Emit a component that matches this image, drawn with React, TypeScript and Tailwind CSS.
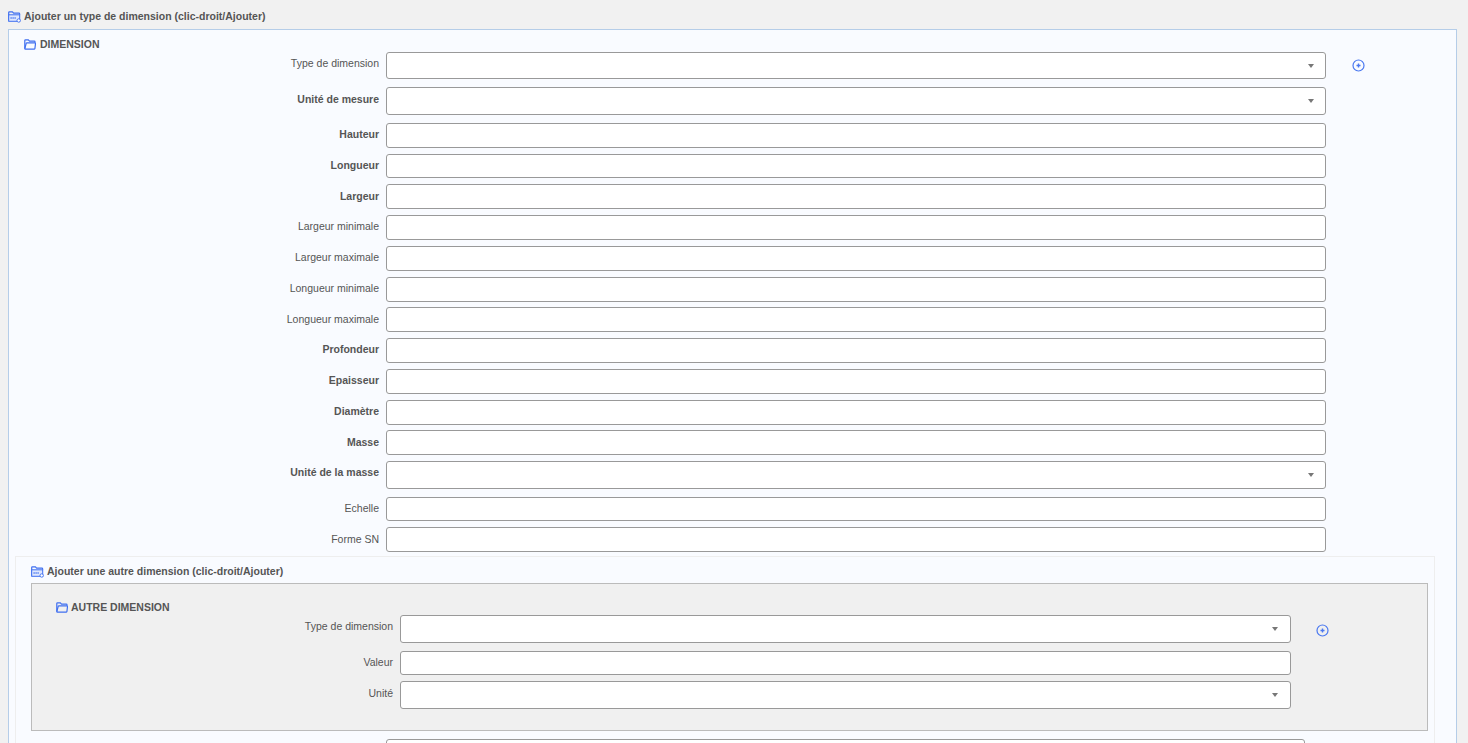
const sans = "font-['Liberation_Sans',Arial,sans-serif]";

const FolderOpen = () => (
  <svg width="12" height="11" viewBox="0 0 12 11" fill="none" stroke="#3f6ff0" strokeWidth="1.200" className="shrink-0">
    <path d="M.8 9.500V1.500c0-.4.300-.7.700-.7h2.800l1.200 1.300h4.800c.4 0 .7.300.7.700v.9" />
    <path d="M.8 9.500c0 .3.200.6.600.6h8.800c.4 0 .6-.2.700-.5L11.500 4.500c.1-.4-.1-.7-.5-.7H2.900c-.4 0-.6.200-.7.500L.8 9.500z" />
  </svg>
);

const FolderForm = () => (
  <svg width="13" height="12" viewBox="0 0 13 12" fill="none" className="shrink-0">
    <path d="M.7 9.800V1.500c0-.4.300-.7.700-.7h3l1.200 1.300h5.300c.4 0 .7.300.7.700v1" stroke="#3f6ff0" strokeWidth="1.200" />
    <rect x=".7" y="3.800" width="11" height="6.500" fill="#dfe7fd" stroke="#3f6ff0" strokeWidth="1" />
    <path d="M2.500 7h5.500" stroke="#3f6ff0" strokeWidth="1.400" strokeDasharray="1.200 .8" />
    <circle cx="10.700" cy="9.500" r="1.700" fill="#ffffff" stroke="#3f6ff0" strokeWidth=".9" />
  </svg>
);

const AddIcon = () => (
  <svg width="13" height="13" viewBox="0 0 13 13" fill="none" className="shrink-0">
    <circle cx="6.500" cy="6.500" r="5.500" stroke="#4a78f0" strokeWidth="1.200" />
    <path d="M4.500 6.500h4M6.500 4.500v4" stroke="#4a78f0" strokeWidth="1.400" />
  </svg>
);

type Field = { label: string; bold?: boolean; select?: boolean; h: number; mb: number; low?: boolean };

const dimensionFields: Field[] = [
  { label: 'Type de dimension', select: true, h: 27, mb: 8 },
  { label: 'Unité de mesure', bold: true, select: true, h: 28, mb: 8, low: true },
  { label: 'Hauteur', bold: true, h: 25, mb: 6 },
  { label: 'Longueur', bold: true, h: 24, mb: 6 },
  { label: 'Largeur', bold: true, h: 25, mb: 6, low: true },
  { label: 'Largeur minimale', h: 25, mb: 6 },
  { label: 'Largeur maximale', h: 25, mb: 6 },
  { label: 'Longueur minimale', h: 25, mb: 5 },
  { label: 'Longueur maximale', h: 25, mb: 6, low: true },
  { label: 'Profondeur', bold: true, h: 25, mb: 6 },
  { label: 'Epaisseur', bold: true, h: 25, mb: 6 },
  { label: 'Diamètre', bold: true, h: 25, mb: 5 },
  { label: 'Masse', bold: true, h: 25, mb: 6, low: true },
  { label: 'Unité de la masse', bold: true, select: true, h: 28, mb: 8 },
  { label: 'Echelle', h: 24, mb: 6 },
  { label: 'Forme SN', h: 25, mb: 0, low: true },
];

const otherFields: Field[] = [
  { label: 'Type de dimension', select: true, h: 28, mb: 8 },
  { label: 'Valeur', h: 24, mb: 6 },
  { label: 'Unité', select: true, h: 28, mb: 0, low: true },
];

const Control = ({ field, caretPad }: { field: Field; caretPad: string }) => (
  <div className={`flex h-full w-full items-center justify-end rounded-[3px] border border-[#999999] bg-white ${caretPad}`}>
    {field.select && <span className="h-0 w-0 border-x-[3.500px] border-t-[4px] border-x-transparent border-t-[#777777]" />}
  </div>
);

const Row = ({ field, labelW, inputW, caretPad, add }: { field: Field; labelW: string; inputW: string; caretPad: string; add?: string }) => (
  <div className="flex" style={{ height: field.h, marginBottom: field.mb }}>
    <label className={`${labelW} shrink-0 pr-[7px] text-right text-[10.5px] leading-[13px] text-[#555555] ${field.low ? 'pt-[6px]' : 'pt-[5px]'} ${field.bold ? 'font-bold' : ''}`}>
      {field.label}
    </label>
    <div className={`${inputW} shrink-0`}>
      <Control field={field} caretPad={caretPad} />
    </div>
    {add && <div className={add}><AddIcon /></div>}
  </div>
);

export default function App() {
  return (
    <div className={`${sans} h-[743px] w-[1468px] overflow-hidden bg-[#f1f1f1] pl-[8px]`}>
      <div className="flex h-[29px] items-center gap-[3px] pt-[5px] text-[10.5px] font-bold text-[#555555]">
        <FolderForm />
        <span>Ajouter un type de dimension (clic-droit/Ajouter)</span>
      </div>

      <div className="h-[730px] w-[1449px] border border-[#b5cde8] bg-[#f9fbff] pl-[6px]">
        <div className="flex h-[22px] items-center gap-[4px] pl-[9px] pt-[7px] text-[10.5px] font-bold text-[#555555]">
          <FolderOpen />
          <span>DIMENSION</span>
        </div>

        {dimensionFields.map((f, i) => (
          <Row
            key={f.label}
            field={f}
            labelW="w-[371px]"
            inputW="w-[940px]"
            caretPad="pr-[11px]"
            add={i === 0 ? 'pl-[26px] pt-[7px]' : undefined}
          />
        ))}

        <div className="mt-[4px] h-[200px] w-[1420px] border border-[#eeeeee] px-[15px]">
          <div className="flex h-[26px] items-center gap-[3px] pt-[4px] text-[10.5px] font-bold text-[#555555]">
            <FolderForm />
            <span>Ajouter une autre dimension (clic-droit/Ajouter)</span>
          </div>

          <div className="h-[148px] w-[1397px] border border-[#bbbbbb] bg-[#f0f0f0] pl-[24px]">
            <div className="flex h-[31px] items-center gap-[3px] pt-[16px] text-[10.5px] font-bold text-[#555555]">
              <FolderOpen />
              <span>AUTRE DIMENSION</span>
            </div>
            {otherFields.map((f, i) => (
              <Row
                key={f.label}
                field={f}
                labelW="w-[344px]"
                inputW="w-[891px]"
                caretPad="pr-[12px]"
                add={i === 0 ? 'pl-[25px] pt-[9px]' : undefined}
              />
            ))}
          </div>

          <div className="mt-[8px] flex">
            <div className="w-[355px] shrink-0" />
            <div className="h-[28px] w-[919px] rounded-[3px] border border-[#999999] bg-white" />
          </div>
        </div>
      </div>
    </div>
  );
}
